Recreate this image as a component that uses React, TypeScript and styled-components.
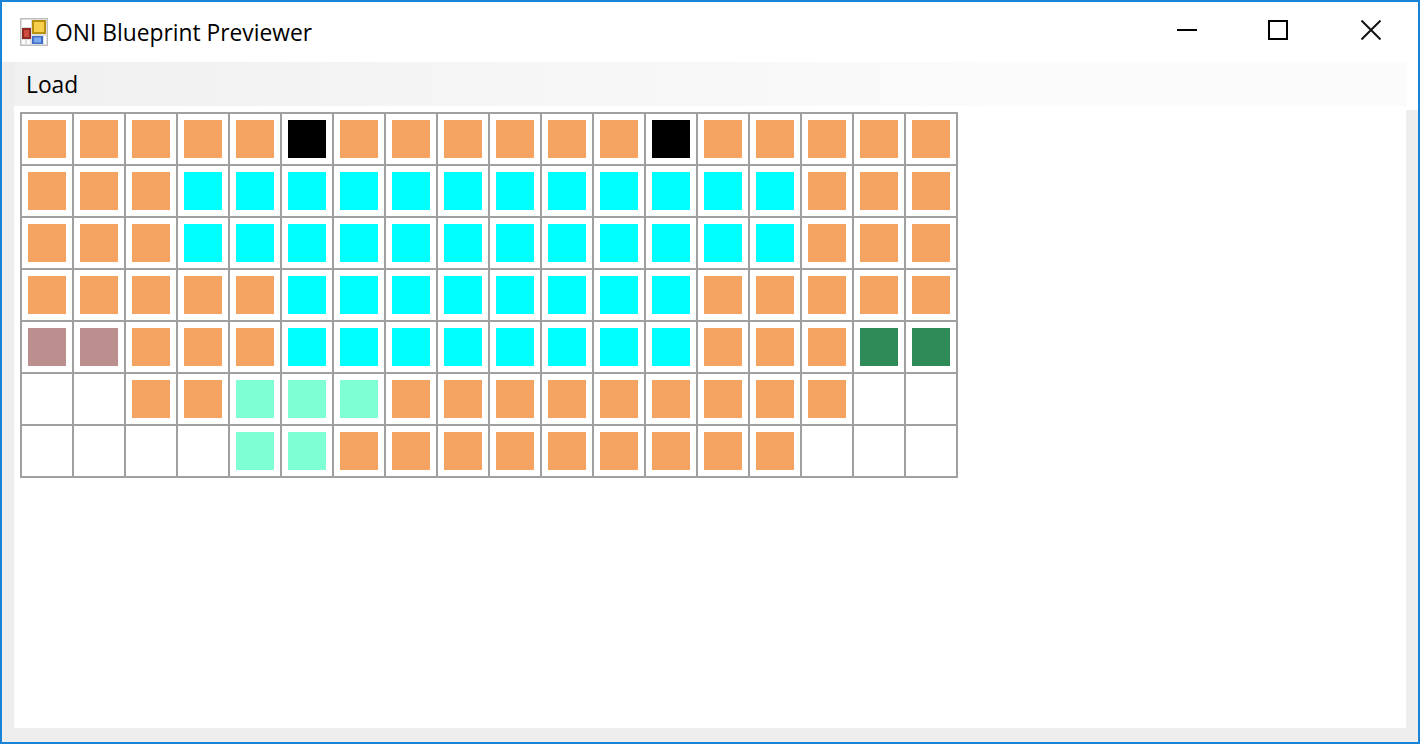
import React from 'react';
import styled, { createGlobalStyle } from 'styled-components';

const GlobalStyle = createGlobalStyle`
  html, body {
    margin: 0;
    padding: 0;
    background: #fff;
    overflow: hidden;
  }
`;

const Window = styled.div`
  box-sizing: border-box;
  width: 1420px;
  height: 744px;
  border: 2px solid #1883d7;
  display: flex;
  flex-direction: column;
  background: #fff;
  font-family: 'Open Sans', 'Liberation Sans', sans-serif;
  color: #000;
`;

const TitleBar = styled.div`
  flex: 0 0 60px;
  display: flex;
  align-items: center;
  padding-left: 18px;
`;

const AppIcon = styled.svg`
  width: 28px;
  height: 28px;
  margin-right: 8px;
  margin-top: -1px;
  filter: blur(0.5px);
`;

const Title = styled.span`
  font-size: 22.8px;
  line-height: 28px;
  flex: 1;
  margin-top: 1px;
  margin-left: -1px;
`;

const ControlButton = styled.div<{ $width: number }>`
  width: ${({ $width }) => $width}px;
  height: 60px;
  display: flex;
  align-items: center;
  justify-content: center;
  svg {
    margin-top: -4px;
  }
`;

const Body = styled.div`
  flex: 1;
  display: flex;
  min-height: 0;
`;

const Main = styled.div`
  flex: 1;
  display: flex;
  flex-direction: column;
  background: #eeeeee;
  padding: 0 0 14px 12px;
`;

const RightGutter = styled.div`
  flex: 0 0 12px;
  background: linear-gradient(180deg, #fff 48px, #eeeeee 48px);
`;

const MenuBar = styled.div`
  flex: 0 0 44px;
  display: flex;
  align-items: center;
  background: linear-gradient(90deg, #f0f0f0 0%, #fbfbfb 70%, #fbfbfb 100%);
`;

const MenuItem = styled.span`
  font-size: 22.8px;
  line-height: 28px;
  margin-left: 12px;
  margin-top: 2px;
`;

const Client = styled.div`
  flex: 1;
  background: #fff;
  padding: 6px;
`;

const Grid = styled.div`
  display: grid;
  grid-template-columns: repeat(18, 52px);
  grid-auto-rows: 52px;
  width: max-content;
  border-right: 2px solid #a0a0a0;
  border-bottom: 2px solid #a0a0a0;
`;

const Cell = styled.div`
  box-sizing: border-box;
  border-left: 2px solid #a0a0a0;
  border-top: 2px solid #a0a0a0;
  padding: 6px;
`;

const Swatch = styled.div<{ $color: string }>`
  width: 38px;
  height: 38px;
  background: ${({ $color }) => $color};
`;

const palette: Record<string, string> = {
  o: '#f4a460',
  k: '#000000',
  c: '#00ffff',
  r: '#bc8f8f',
  g: '#2e8b57',
  a: '#7fffd4',
};

const rows = [
  'oooook' + 'o'.repeat(6) + 'k' + 'o'.repeat(5),
  'ooo' + 'c'.repeat(12) + 'ooo',
  'ooo' + 'c'.repeat(12) + 'ooo',
  'ooooo' + 'c'.repeat(8) + 'ooooo',
  'rrooo' + 'c'.repeat(8) + 'ooogg',
  '..ooaaa' + 'o'.repeat(9) + '..',
  '....aa' + 'o'.repeat(9) + '...',
];

const Logo = () => (
  <AppIcon viewBox="0 0 28 28">
    <rect x="0.5" y="0.5" width="27" height="27" fill="#dedede" stroke="#bdbdbd" />
    <rect x="2" y="2" width="9" height="7" fill="#ffffff" />
    <rect x="12" y="2" width="14" height="14" fill="#b8900f" />
    <rect x="14" y="4" width="10" height="10" fill="#f7cf4a" />
    <rect x="2" y="10" width="9" height="11" fill="#8e2a22" />
    <rect x="4" y="12" width="5" height="7" fill="#cf4a3e" />
    <rect x="2" y="22" width="3" height="4" fill="#ffffff" />
    <rect x="7" y="22" width="3" height="4" fill="#ffffff" />
    <rect x="12" y="18" width="11" height="8" fill="#3f6fc8" />
    <rect x="14" y="19.5" width="7" height="5" fill="#7fa8ec" />
    <rect x="24" y="18" width="2" height="8" fill="#ffffff" />
  </AppIcon>
);

const App = () => (
  <Window>
    <GlobalStyle />
    <TitleBar>
      <Logo />
      <Title>ONI Blueprint Previewer</Title>
      <ControlButton $width={90}>
        <svg width="20" height="20" viewBox="0 0 20 20">
          <path d="M0 10h20" stroke="#000" strokeWidth="2" fill="none" />
        </svg>
      </ControlButton>
      <ControlButton $width={92}>
        <svg width="20" height="20" viewBox="0 0 20 20">
          <rect x="1" y="1" width="18" height="18" stroke="#000" strokeWidth="2" fill="none" />
        </svg>
      </ControlButton>
      <ControlButton $width={94}>
        <svg width="20" height="20" viewBox="0 0 20 20">
          <path d="M0.5 0.5l19 19M19.5 0.5l-19 19" stroke="#111" strokeWidth="2" fill="none" />
        </svg>
      </ControlButton>
    </TitleBar>
    <Body>
      <Main>
        <MenuBar>
          <MenuItem>Load</MenuItem>
        </MenuBar>
        <Client>
          <Grid>
            {rows.map((row, y) =>
              row.split('').map((key, x) => (
                <Cell key={`${y}-${x}`}>
                  {palette[key] && <Swatch $color={palette[key]} />}
                </Cell>
              ))
            )}
          </Grid>
        </Client>
      </Main>
      <RightGutter />
    </Body>
  </Window>
);

export default App;
